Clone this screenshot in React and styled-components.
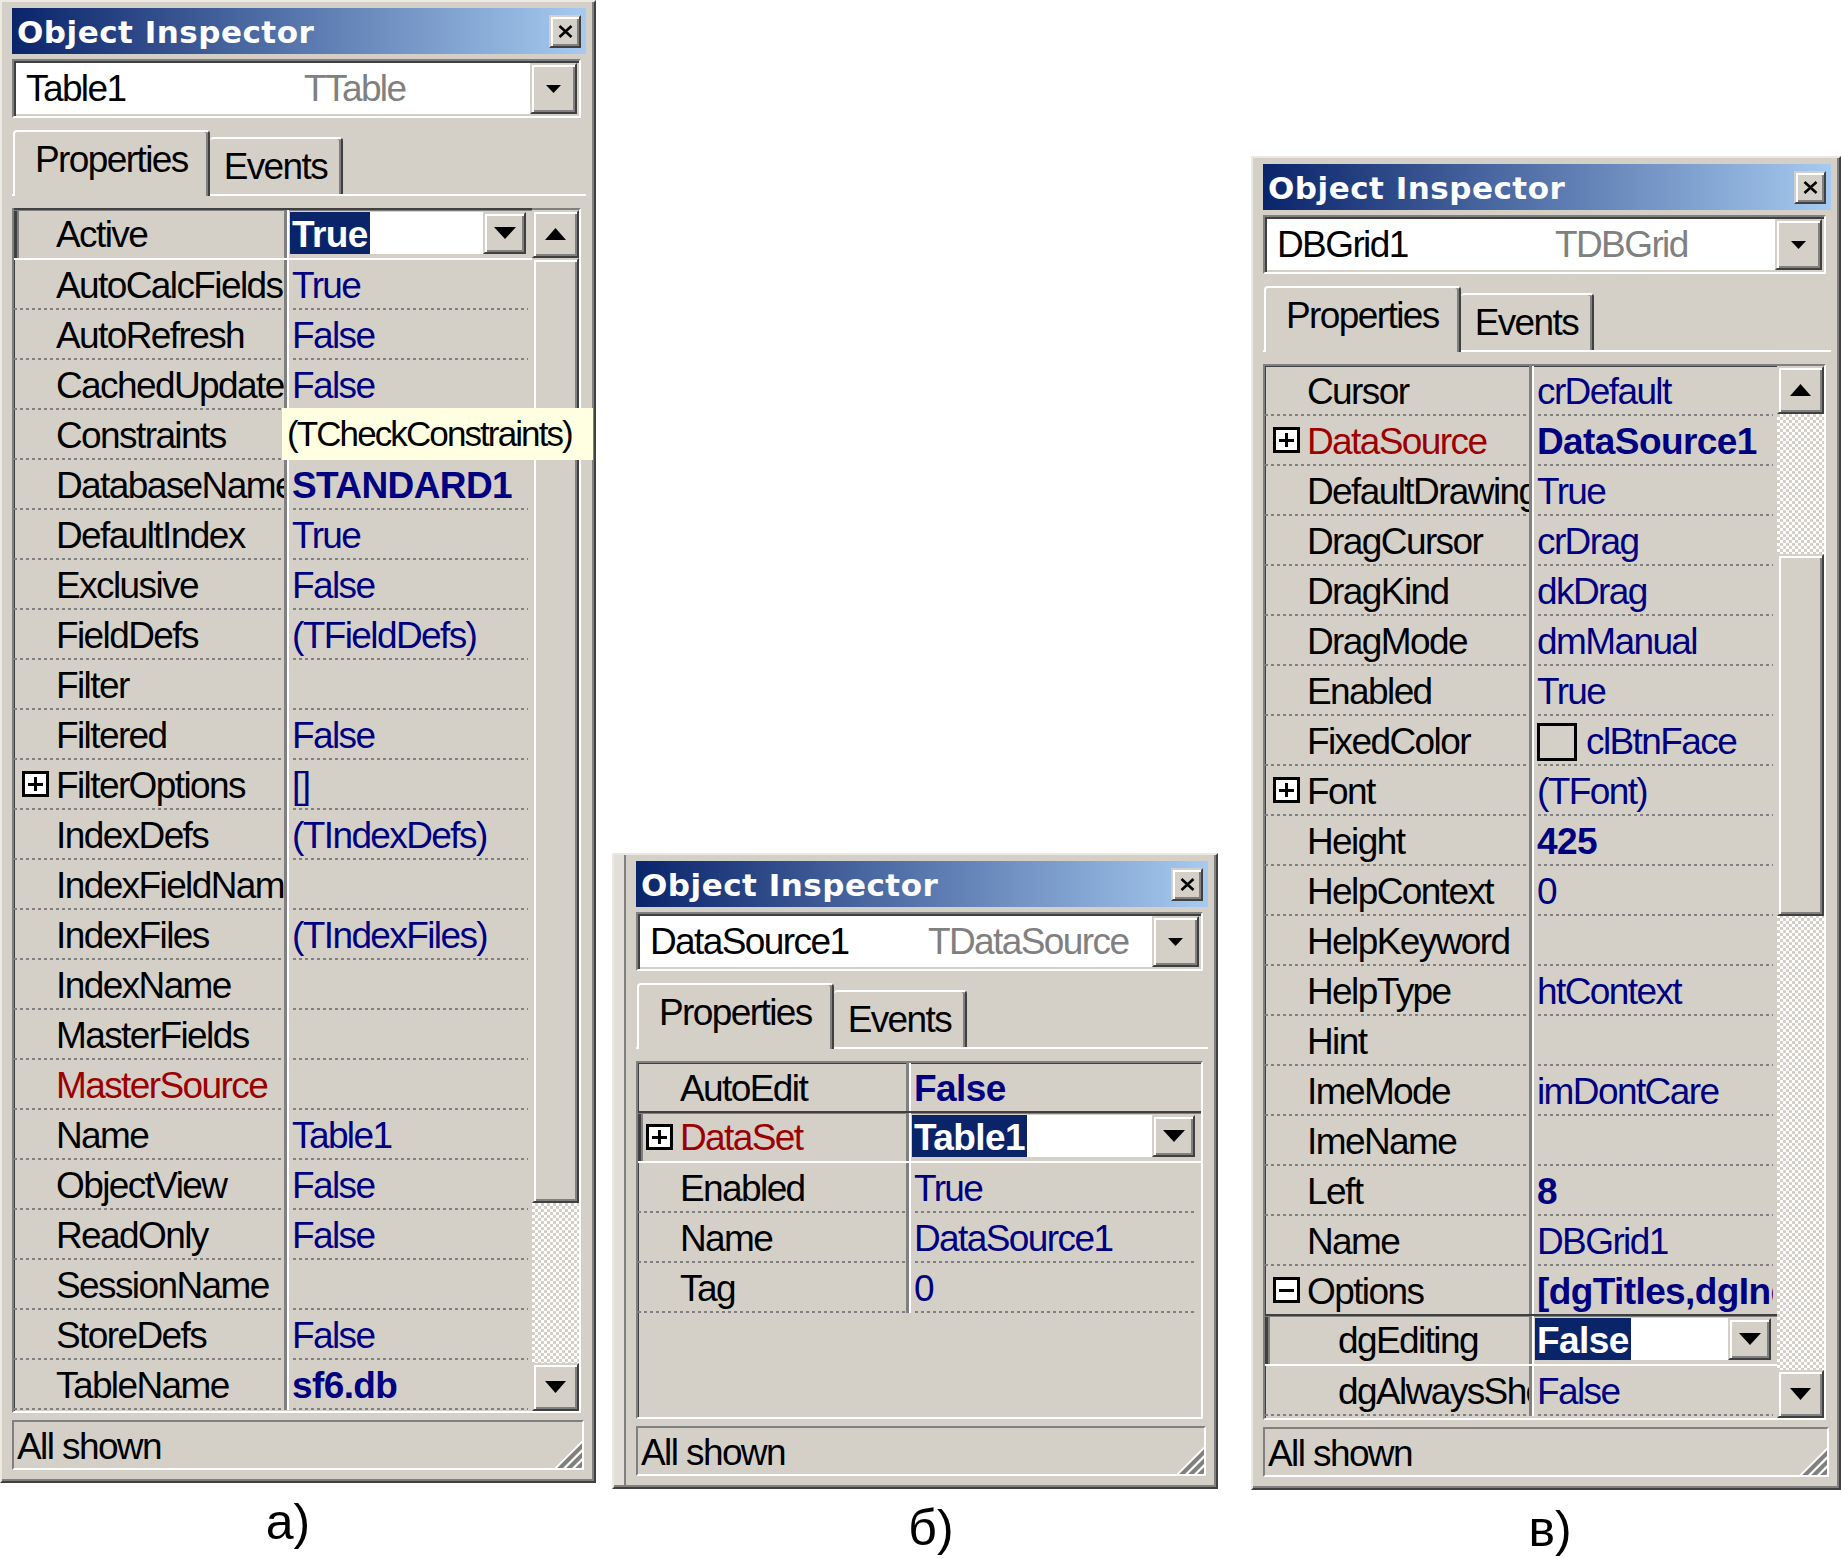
import React from "react";
import styled, { createGlobalStyle, css } from "styled-components";

const FACE = "#d4d0c8";
const LIGHT = "#ece9e2";
const SHADOW = "#808080";
const DARK = "#404040";
const NAVY = "#000080";
const MAROON = "#9c0000";
const SELECT = "#0a246a";

const GlobalStyle = createGlobalStyle`
  *, *::before, *::after { box-sizing: border-box; }
  html, body { margin: 0; padding: 0; background: #ffffff; }
  body { font-family: "Liberation Sans", Arial, sans-serif; }
  #root { width: 1841px; height: 1558px; overflow: hidden; }
`;

const raised = css`
  background: ${FACE};
  border: 2px solid;
  border-color: ${FACE} ${DARK} ${DARK} ${FACE};
  box-shadow: inset 2px 2px #fff, inset -2px -2px ${SHADOW};
`;

const uiText = css`
  font-family: "Liberation Sans", Arial, sans-serif;
  font-size: 37px;
  letter-spacing: -1.6px;
`;

const dotted = css`
  content: "";
  position: absolute;
  bottom: 0;
  height: 2px;
  background: repeating-linear-gradient(to right, ${SHADOW} 0 3px, transparent 3px 6px);
`;

const Page = styled.div`
  display: flex;
  align-items: flex-start;
  width: 1841px;
  height: 1558px;
`;

const Figure = styled.div`
  display: flex;
  flex-direction: column;
  align-items: center;
  flex-shrink: 0;
  margin-left: ${(p) => p.$left}px;
  margin-top: ${(p) => p.$top}px;
`;

const Caption = styled.div`
  font-family: "Liberation Sans", Arial, sans-serif;
  font-size: 50px;
  line-height: 50px;
  color: #000;
  margin-top: 14px;
  margin-left: ${(p) => p.$shift * 2}px;
`;

const Panel = styled.div`
  width: ${(p) => p.$width}px;
  height: ${(p) => p.$height}px;
  display: flex;
  flex-direction: column;
  background: ${FACE};
  border: 2px solid;
  border-color: ${LIGHT} ${DARK} ${DARK} ${LIGHT};
  box-shadow: inset -2px -2px ${SHADOW}
    ${(p) => (p.$padLeft > 12 ? `, inset 10px 0 #e2dfd8, inset 12px 0 ${SHADOW}` : "")};
  padding: 6px 8px 11px ${(p) => p.$padLeft}px;
`;

const TitleBar = styled.div`
  height: 46px;
  flex-shrink: 0;
  display: flex;
  align-items: center;
  justify-content: space-between;
  padding: 0 5px;
  background: linear-gradient(to right, #0a246a, #a6caf0);
`;

const TitleText = styled.span`
  font-family: "DejaVu Sans", Verdana, sans-serif;
  font-weight: bold;
  font-size: 31px;
  letter-spacing: 0.5px;
  color: #fff;
  padding-top: 1px;
  white-space: nowrap;
`;

const CloseButton = styled.div`
  ${raised};
  width: 32px;
  height: 33px;
  display: flex;
  align-items: center;
  justify-content: center;
`;

const Combo = styled.div`
  ${uiText};
  height: 59px;
  flex-shrink: 0;
  margin: 5px 5px 0 0;
  display: flex;
  background: #fff;
  border: 2px solid;
  border-color: ${SHADOW} #fff #fff ${SHADOW};
  box-shadow: inset 2px 2px ${DARK}, inset -2px -2px ${FACE};
`;

const ComboText = styled.div`
  flex: 1;
  display: flex;
  align-items: center;
  padding-left: 12px;
  white-space: nowrap;
  overflow: hidden;
`;

const ComboName = styled.span`
  width: 278px;
  color: #000;
`;

const ComboClass = styled.span`
  color: ${SHADOW};
`;

const ComboButton = styled.div`
  ${raised};
  width: 47px;
  margin: 2px 2px 2px 0;
  display: flex;
  align-items: center;
  justify-content: center;
`;

const TabStrip = styled.div`
  height: 66px;
  flex-shrink: 0;
  margin-top: 12px;
  display: flex;
  align-items: flex-end;
  border-bottom: 2px solid #fff;
`;

const Tab = styled.div`
  ${uiText};
  position: relative;
  z-index: ${(p) => (p.$active ? 1 : 0)};
  height: ${(p) => (p.$active ? 66 : 57)}px;
  margin-bottom: ${(p) => (p.$active ? -2 : 0)}px;
  margin-left: ${(p) => (p.$active ? 1 : 0)}px;
  padding: 4px ${(p) => (p.$active ? 20 : 14)}px 0;
  line-height: 48px;
  color: #000;
  background: ${FACE};
  border-top: 2px solid #fff;
  border-left: ${(p) => (p.$active ? "2px solid #fff" : "none")};
  border-right: 2px solid ${DARK};
  box-shadow: inset -2px 0 ${SHADOW};
  border-top-left-radius: 4px;
  border-top-right-radius: 4px;
  white-space: nowrap;
`;

const Grid = styled.div`
  flex: 1;
  min-height: 0;
  margin: 12px 5px 0 0;
  display: flex;
  background: ${FACE};
  border: 2px solid;
  border-color: ${SHADOW} #fff #fff ${SHADOW};
  box-shadow: inset 1px 1px ${DARK};
`;

const RowsArea = styled.div`
  flex: 1;
  min-width: 0;
`;

const Row = styled.div`
  ${uiText};
  display: grid;
  grid-template-columns: ${(p) => p.$nameWidth}px 1fr;
  height: 50px;
  ${(p) =>
    p.$selected &&
    css`
      position: relative;
      z-index: 1;
      height: 52px;
      margin-top: -2px;
      background: ${FACE};
      border-top: 2px solid ${DARK};
      border-bottom: 2px solid #fff;
      box-shadow: inset 0 1px ${SHADOW}, inset 3px 0 ${DARK}, inset 5px 0 ${SHADOW};
    `}
`;

const NameCell = styled.div`
  position: relative;
  padding-left: ${(p) => p.$indent}px;
  padding-top: 2px;
  line-height: ${(p) => (p.$selected ? 46 : 48)}px;
  border-right: 3px solid ${SHADOW};
  color: ${(p) => (p.$red ? MAROON : "#000")};
  white-space: nowrap;
  overflow: hidden;

  &::after {
    ${dotted};
    left: 0;
    right: 0;
    display: ${(p) => (p.$selected ? "none" : "block")};
  }
`;

const ExpandBox = styled.span`
  position: absolute;
  left: 8px;
  top: 11px;
  width: 27px;
  height: 26px;
  border: 3px solid #000;
  background: #fff;

  &::before {
    content: "";
    position: absolute;
    left: 3px;
    right: 3px;
    top: 8.5px;
    height: 3px;
    background: #000;
  }

  &::after {
    content: "";
    position: absolute;
    top: 3px;
    bottom: 3px;
    left: 9px;
    width: 3px;
    background: #000;
    display: ${(p) => (p.$minus ? "none" : "block")};
  }
`;

const ValueCell = styled.div`
  position: relative;
  min-width: 0;
  padding: 0 4px 0 5px;
  box-shadow: inset 2px 0 #fff;

  &::after {
    ${dotted};
    left: 6px;
    right: 4px;
    display: ${(p) => (p.$selected ? "none" : "block")};
  }
`;

const ValueText = styled.div`
  padding-top: 2px;
  line-height: 48px;
  color: ${NAVY};
  font-weight: ${(p) => (p.$bold ? 700 : 400)};
  letter-spacing: ${(p) => (p.$bold ? "-0.6px" : "-1.6px")};
  white-space: nowrap;
  overflow: hidden;
`;

const Swatch = styled.span`
  display: inline-block;
  width: 40px;
  height: 38px;
  margin-right: 9px;
  vertical-align: -7px;
  border: 3px solid #000;
  background: ${FACE};
`;

const Hint = styled.div`
  position: absolute;
  z-index: 10;
  left: -5px;
  top: -2px;
  width: 311px;
  height: 52px;
  padding: 2px 0 0 5px;
  line-height: 48px;
  background: #ffffe1;
  color: #000;
  font-size: 35px;
  letter-spacing: -1.9px;
  white-space: nowrap;
`;

const Editor = styled.div`
  display: flex;
  height: 42px;
  margin: 2px 2px 0 -2px;
`;

const EditField = styled.div`
  flex: 1;
  background: #fff;
  white-space: nowrap;
  overflow: hidden;
`;

const Highlight = styled.span`
  display: inline-block;
  height: 42px;
  padding: 3px 2px 0;
  line-height: 39px;
  background: ${SELECT};
  color: #fff;
  font-weight: 700;
  letter-spacing: -0.6px;
`;

const EditButton = styled.div`
  ${raised};
  width: 43px;
  display: flex;
  align-items: center;
  justify-content: center;
`;

const ScrollBar = styled.div`
  width: 47px;
  flex-shrink: 0;
  display: flex;
  flex-direction: column;
  background-color: ${FACE};
  background-image: conic-gradient(#fff 90deg, ${FACE} 90deg 180deg, #fff 180deg 270deg, ${FACE} 270deg);
  background-size: 6px 6px;
`;

const ScrollButton = styled.div`
  ${raised};
  height: 48px;
  flex-shrink: 0;
  display: flex;
  align-items: center;
  justify-content: center;
`;

const Thumb = styled.div`
  ${raised};
  flex-shrink: 0;
  height: ${(p) => p.$h}px;
`;

const Track = styled.div`
  flex: ${(p) => (p.$h ? `0 0 ${p.$h}px` : "1")};
`;

const StatusBar = styled.div`
  ${uiText};
  height: 50px;
  flex-shrink: 0;
  margin: 7px 2px 0 0;
  display: flex;
  border: 2px solid;
  border-color: ${SHADOW} #fff #fff ${SHADOW};
  padding-left: 3px;
`;

const StatusText = styled.span`
  padding-top: 3px;
  line-height: 43px;
  color: #000;
  white-space: nowrap;
`;

const GripBox = styled.div`
  margin-left: auto;
  align-self: flex-end;
  width: 30px;
  height: 30px;
  display: flex;
`;

const Triangle = ({ up, w, h }) => (
  <svg width={w} height={h} viewBox={`0 0 ${w} ${h}`}>
    <polygon
      points={up ? `${w / 2},0 ${w},${h} 0,${h}` : `0,0 ${w},0 ${w / 2},${h}`}
      fill="#000"
    />
  </svg>
);

const CloseGlyph = () => (
  <svg width="15" height="13" viewBox="0 0 15 13">
    <path d="M1.5 1 L13.5 12 M13.5 1 L1.5 12" stroke="#000" strokeWidth="2.6" fill="none" />
  </svg>
);

const SizeGrip = () => (
  <GripBox>
    <svg width="30" height="30" viewBox="0 0 30 30">
      {[4, 13, 22].map((d) => (
        <g key={d}>
          <line x1={d - 3} y1="33" x2="33" y2={d - 3} stroke="#fff" strokeWidth="2" />
          <line x1={d + 1} y1="33" x2="33" y2={d + 1} stroke={SHADOW} strokeWidth="4" />
        </g>
      ))}
    </svg>
  </GripBox>
);

const PropRow = ({ row, nameWidth }) => (
  <Row $nameWidth={nameWidth} $selected={row.selected}>
    <NameCell $indent={row.sub ? 73 : 42} $red={row.red} $selected={row.selected}>
      {row.expand && <ExpandBox $minus={row.expand === "-"} />}
      {row.name}
    </NameCell>
    <ValueCell $selected={row.selected}>
      {row.selected ? (
        <Editor>
          <EditField>
            <Highlight>{row.value}</Highlight>
          </EditField>
          <EditButton>
            <Triangle w={22} h={12} />
          </EditButton>
        </Editor>
      ) : row.hint ? (
        <Hint>{row.value}</Hint>
      ) : (
        <ValueText $bold={row.bold}>
          {row.swatch && <Swatch />}
          {row.value}
        </ValueText>
      )}
    </ValueCell>
  </Row>
);

const Inspector = ({ width, height, padLeft, objName, objClass, nameWidth, rows, scroll }) => (
  <Panel $width={width} $height={height} $padLeft={padLeft}>
    <TitleBar>
      <TitleText>Object Inspector</TitleText>
      <CloseButton>
        <CloseGlyph />
      </CloseButton>
    </TitleBar>
    <Combo>
      <ComboText>
        <ComboName>{objName}</ComboName>
        <ComboClass>{objClass}</ComboClass>
      </ComboText>
      <ComboButton>
        <Triangle w={15} h={8} />
      </ComboButton>
    </Combo>
    <TabStrip>
      <Tab $active>Properties</Tab>
      <Tab>Events</Tab>
    </TabStrip>
    <Grid>
      <RowsArea>
        {rows.map((r) => (
          <PropRow key={r.name} row={r} nameWidth={nameWidth} />
        ))}
      </RowsArea>
      {scroll && (
        <ScrollBar>
          <ScrollButton>
            <Triangle up w={21} h={12} />
          </ScrollButton>
          {scroll.before > 0 && <Track $h={scroll.before} />}
          <Thumb $h={scroll.thumb} />
          <Track />
          <ScrollButton>
            <Triangle w={21} h={12} />
          </ScrollButton>
        </ScrollBar>
      )}
    </Grid>
    <StatusBar>
      <StatusText>All shown</StatusText>
      <SizeGrip />
    </StatusBar>
  </Panel>
);

const tableRows = [
  { name: "Active", value: "True", selected: true },
  { name: "AutoCalcFields", value: "True" },
  { name: "AutoRefresh", value: "False" },
  { name: "CachedUpdates", value: "False" },
  { name: "Constraints", value: "(TCheckConstraints)", hint: true },
  { name: "DatabaseName", value: "STANDARD1", bold: true },
  { name: "DefaultIndex", value: "True" },
  { name: "Exclusive", value: "False" },
  { name: "FieldDefs", value: "(TFieldDefs)" },
  { name: "Filter", value: "" },
  { name: "Filtered", value: "False" },
  { name: "FilterOptions", value: "[]", expand: "+" },
  { name: "IndexDefs", value: "(TIndexDefs)" },
  { name: "IndexFieldNames", value: "" },
  { name: "IndexFiles", value: "(TIndexFiles)" },
  { name: "IndexName", value: "" },
  { name: "MasterFields", value: "" },
  { name: "MasterSource", value: "", red: true },
  { name: "Name", value: "Table1" },
  { name: "ObjectView", value: "False" },
  { name: "ReadOnly", value: "False" },
  { name: "SessionName", value: "" },
  { name: "StoreDefs", value: "False" },
  { name: "TableName", value: "sf6.db", bold: true },
];

const sourceRows = [
  { name: "AutoEdit", value: "False", bold: true },
  { name: "DataSet", value: "Table1", red: true, expand: "+", selected: true },
  { name: "Enabled", value: "True" },
  { name: "Name", value: "DataSource1" },
  { name: "Tag", value: "0" },
];

const gridRows = [
  { name: "Cursor", value: "crDefault" },
  { name: "DataSource", value: "DataSource1", red: true, expand: "+", bold: true },
  { name: "DefaultDrawing", value: "True" },
  { name: "DragCursor", value: "crDrag" },
  { name: "DragKind", value: "dkDrag" },
  { name: "DragMode", value: "dmManual" },
  { name: "Enabled", value: "True" },
  { name: "FixedColor", value: "clBtnFace", swatch: true },
  { name: "Font", value: "(TFont)", expand: "+" },
  { name: "Height", value: "425", bold: true },
  { name: "HelpContext", value: "0" },
  { name: "HelpKeyword", value: "" },
  { name: "HelpType", value: "htContext" },
  { name: "Hint", value: "" },
  { name: "ImeMode", value: "imDontCare" },
  { name: "ImeName", value: "" },
  { name: "Left", value: "8", bold: true },
  { name: "Name", value: "DBGrid1" },
  {
    name: "Options",
    value: "[dgTitles,dgIndicator,dgColumnResize,dgColLines,dgRowLines,dgTabs,dgConfirmDelete,dgCancelOnExit]",
    expand: "-",
    bold: true,
  },
  { name: "dgEditing", value: "False", sub: true, selected: true },
  { name: "dgAlwaysShowEditor", value: "False", sub: true },
];

export default function App() {
  return (
    <>
      <GlobalStyle />
      <Page>
        <Figure $left={0} $top={0}>
          <Inspector
            width={596}
            height={1483}
            padLeft={10}
            objName="Table1"
            objClass="TTable"
            nameWidth={273}
            rows={tableRows}
            scroll={{ before: 0, thumb: 945 }}
          />
          <Caption $shift={-10}>а)</Caption>
        </Figure>
        <Figure $left={16} $top={853}>
          <Inspector
            width={606}
            height={636}
            padLeft={22}
            objName="DataSource1"
            objClass="TDataSource"
            nameWidth={271}
            rows={sourceRows}
          />
          <Caption $shift={16}>б)</Caption>
        </Figure>
        <Figure $left={33} $top={156}>
          <Inspector
            width={590}
            height={1334}
            padLeft={10}
            objName="DBGrid1"
            objClass="TDBGrid"
            nameWidth={267}
            rows={gridRows}
            scroll={{ before: 140, thumb: 362 }}
          />
          <Caption $shift={4}>в)</Caption>
        </Figure>
      </Page>
    </>
  );
}
